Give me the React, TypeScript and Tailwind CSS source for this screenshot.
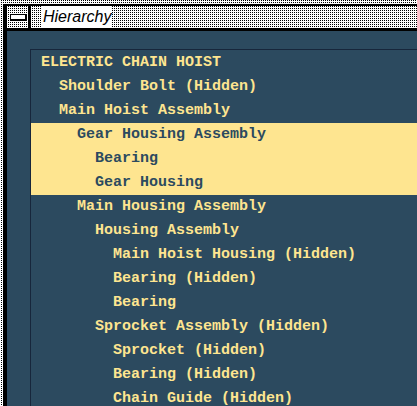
import React from "react";

const rows: { t: string; l: number; hl?: boolean }[] = [
  { t: "ELECTRIC CHAIN HOIST", l: 0 },
  { t: "Shoulder Bolt (Hidden)", l: 1 },
  { t: "Main Hoist Assembly", l: 1 },
  { t: "Gear Housing Assembly", l: 2, hl: true },
  { t: "Bearing", l: 3, hl: true },
  { t: "Gear Housing", l: 3, hl: true },
  { t: "Main Housing Assembly", l: 2 },
  { t: "Housing Assembly", l: 3 },
  { t: "Main Hoist Housing (Hidden)", l: 4 },
  { t: "Bearing (Hidden)", l: 4 },
  { t: "Bearing", l: 4 },
  { t: "Sprocket Assembly (Hidden)", l: 3 },
  { t: "Sprocket (Hidden)", l: 4 },
  { t: "Bearing (Hidden)", l: 4 },
  { t: "Chain Guide (Hidden)", l: 4 },
];

const dots =
  "bg-[conic-gradient(#000_25%,#fff_0)] bg-[length:2px_2px]";

export default function App() {
  return (
    <div
      className={`w-[417px] h-[406px] overflow-hidden pt-[4px] pl-[3px] ${dots}`}
    >
      <div className="h-full bg-black pt-[2px] pl-[4px] flex flex-col">
        <div className="h-[22px] flex shrink-0">
          <div className={`w-[21px] h-full flex items-center justify-center ${dots}`}>
            <div className="w-[16px] h-[6px] border border-black bg-white shadow-[1px_1px_0_#000]" />
          </div>
          <div className="w-[3px] h-full bg-black" />
          <div className={`flex-1 h-full pl-[10px] ${dots}`}>
            <div
              className="h-full w-[70px] bg-white flex items-center pl-[2px] italic text-[16px] text-black leading-none"
              style={{ fontFamily: '"Liberation Sans", Arial, sans-serif' }}
            >
              Hierarchy
            </div>
          </div>
        </div>
        <div className="h-[3px] bg-black shrink-0" />
        <div className="flex-1 bg-[#2c4a5f] pl-[23px] pt-[18px]">
          <div
            className="h-full border-l border-t border-[#17263b] pt-[1px]"
            style={{ fontFamily: '"Liberation Mono", "Courier New", monospace' }}
          >
            {rows.map((r, i) => (
              <div
                key={i}
                className={`h-[24px] leading-[24px] text-[15px] font-bold whitespace-pre ${
                  r.hl ? "bg-[#fee590] text-[#2c4a5f]" : "text-[#fee590]"
                }`}
                style={{ paddingLeft: 10 + r.l * 18 }}
              >
                {r.t}
              </div>
            ))}
          </div>
        </div>
      </div>
    </div>
  );
}
